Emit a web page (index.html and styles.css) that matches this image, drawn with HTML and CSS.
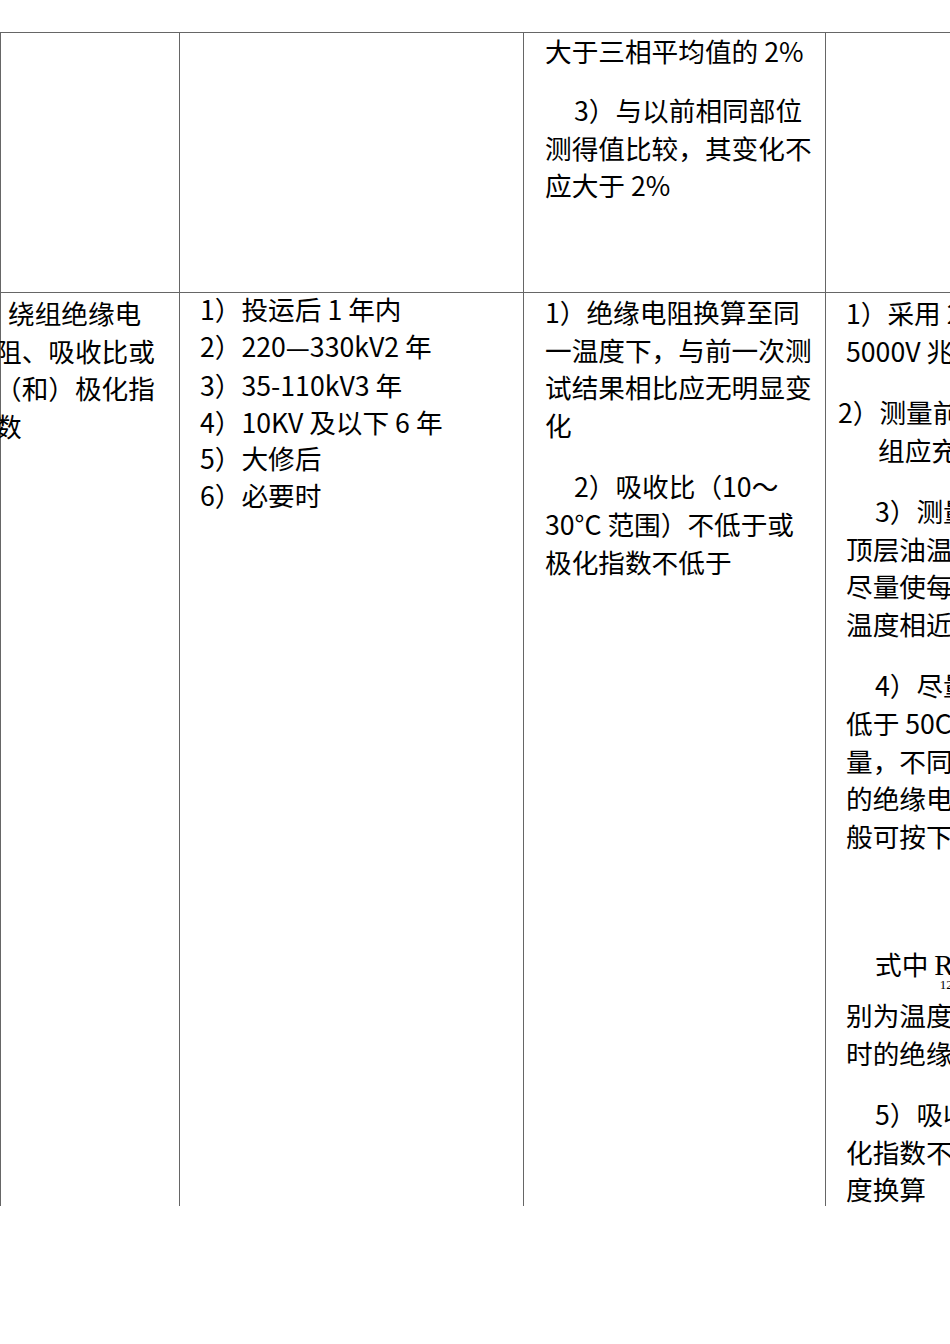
FILE: index.html
```html
<!DOCTYPE html>
<html lang="zh">
<head>
<meta charset="utf-8">
<title>绕组绝缘电阻试验</title>
<link rel="stylesheet" href="styles.css">
</head>
<body>
<div class="page">
  <div class="sheet">
    <div class="cell c1 r1"></div>
    <div class="cell c2 r1"></div>
    <div class="cell c3 r1">
      <p class="para tight">大于三相平均值的 2%</p>
      <p class="para ind tight">3）与以前相同部位测得值比较，其变化不应大于 2%</p>
    </div>
    <div class="cell c4 r1"></div>

    <div class="cell c1 r2">
      <div class="item-name">绕组绝缘电阻、吸收比或（和）极化指数</div>
    </div>
    <div class="cell c2 r2">
      <div class="cycle">1）投运后 1 年内</div>
      <div class="cycle">2）220<span class="dash">—</span>330kV2 年</div>
      <div class="cycle">3）35-110kV3 年</div>
      <div class="cycle">4）10KV 及以下 6 年</div>
      <div class="cycle">5）大修后</div>
      <div class="cycle">6）必要时</div>
    </div>
    <div class="cell c3 r2">
      <p class="para">1）绝缘电阻换算至同一温度下，与前一次测试结果相比应无明显变化</p>
      <p class="para ind">2）吸收比（10～<wbr>30°C 范围）不低于或极化指数不低于</p>
    </div>
    <div class="cell c4 r2">
      <p class="para">1）采用 2500V 或<br>5000V 兆欧表</p>
      <p class="para hang">2）测量前被试绕<br>组应充分放电</p>
      <p class="para ind">3）测量温度以<br>顶层油温为准，<br>尽量使每次测量<br>温度相近</p>
      <p class="para ind">4）尽量在油温<br>低于 50C 时测<br>量，不同温度下<br>的绝缘电阻值一<br>般可按下式换算</p>
      <div class="formula"></div>
      <p class="para ind"><span class="first-line">式中 <span class="sym">R</span><span class="sub">12</span>、R2 分</span>别为温度 t1、t2<br>时的绝缘电阻值</p>
      <p class="para ind">5）吸收比和极<br>化指数不进行温<br>度换算</p>
    </div>
  </div>
</div>
</body>
</html>
```

FILE: styles.css
```css
html, body {
  margin: 0;
  padding: 0;
  overflow: hidden;
  background: #ffffff;
}

body {
  font-family: "Noto Sans CJK SC", "DejaVu Sans", sans-serif;
  font-size: 26.67px;
  color: #000000;
}

.page {
  width: 950px;
  height: 1206px;
  padding-top: 32px;
  box-sizing: border-box;
  overflow: hidden;
}

.sheet {
  display: grid;
  grid-template-columns: 179px 344px 302px 302px;
  grid-template-rows: 260px 1000px;
  width: max-content;
}

.cell {
  border-left: 1px solid #666666;
  border-top: 1px solid #666666;
  box-sizing: border-box;
  line-height: 37.7px;
  min-width: 0;
}

.para {
  margin: 0 0 23.5px 0;
}

.para.tight {
  margin-bottom: 21.3px;
}

.para.ind {
  text-indent: 29px;
}

.para.hang {
  margin-left: -8px;
  padding-left: 40px;
  text-indent: -40px;
}

/* column 1 */
.c1.r2 {
  padding-top: 1px;
}

.item-name {
  margin-left: -6px;
  width: 166px;
  text-indent: 13px;
}

/* column 2 */
.c2 {
  padding-left: 20px;
}

.c2.r2 {
  line-height: 36.6px;
}

.c2.r2 .cycle:first-child {
  margin-top: -2px;
}

.cycle {
  white-space: nowrap;
}

.dash {
  font-family: "DejaVu Sans", sans-serif;
  font-size: 24px;
}

/* column 3 */
.c3 {
  padding-left: 21px;
  padding-right: 10px;
}

.c3.r1 .para:first-child {
  margin-top: -1px;
}

.c3.r2 {
  padding-top: 0;
}

/* column 4 */
.c4 {
  padding-left: 20px;
  white-space: nowrap;
}

.c4.r2 {
  padding-top: 1px;
}

.formula {
  height: 43.5px;
  margin-bottom: 23.5px;
}

.first-line {
  display: block;
  height: 51px;
  line-height: 37.7px;
}

.sym {
  font-family: "Liberation Serif", "DejaVu Serif", serif;
  font-size: 29px;
}

.sub {
  font-family: "Liberation Serif", "DejaVu Serif", serif;
  font-size: 13px;
  vertical-align: -14px;
  margin-left: -14px;
  line-height: 0;
}
```
